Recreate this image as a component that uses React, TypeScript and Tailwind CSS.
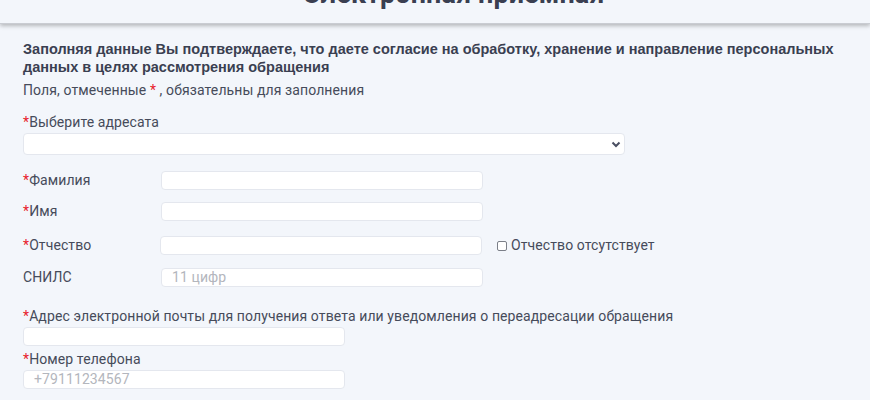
import React from "react";

const Star = () => <span className="text-[#e8212b]">*</span>;

const Input = ({ className = "", placeholder = "" }: { className?: string; placeholder?: string }) => (
  <div className={`h-[19px] bg-white border border-[#e4e7ee] rounded-[4px] flex items-center text-[14px] text-[#b3b6bd] ${className}`}>
    {placeholder}
  </div>
);

export default function App() {
  return (
    <div className="w-[870px] h-[400px] overflow-hidden bg-[#f3f6fb] text-[#464b5a] tracking-[0.1px]" style={{ fontFamily: "Roboto, 'Noto Sans', sans-serif" }}>
      <div className="h-[24px] relative bg-[#f3f6fb] shadow-[0_2px_4px_rgba(0,0,0,0.25)] border-b border-[#c9ccd2] overflow-hidden">
        <div className="absolute left-[38px] right-0 -top-[24px] text-center text-[27px] leading-[36px] font-bold text-[#3a3f51]">
          Электронная приемная
        </div>
      </div>
      <div className="pl-[23px] pt-[16px]">
        <div className="text-[14.5px] font-bold leading-[18px] text-[#3a3f51] w-[830px] tracking-normal" style={{ fontFamily: "'Liberation Sans', Arial, sans-serif" }}>
          Заполняя данные Вы подтверждаете, что даете согласие на обработку, хранение и направление персональных данных в целях рассмотрения обращения
        </div>
        <div className="mt-[5px] text-[14px] leading-[18px]">
          Поля, отмеченные <Star /> , обязательны для заполнения
        </div>
        <div className="mt-[14px] text-[14px] leading-[18px]">
          <Star />Выберите адресата
        </div>
        <div className="mt-[2px] w-[602px] h-[22px] bg-white border border-[#e4e7ee] rounded-[4px] flex items-center justify-end pr-[3px]">
          <svg width="10" height="8" viewBox="0 0 10 8">
            <path d="M1.5 2.5 L5 6 L8.5 2.5" stroke="#4a4f62" strokeWidth="2" fill="none" />
          </svg>
        </div>
        <div className="mt-[16px] flex items-center h-[19px]">
          <div className="w-[138px] text-[14px]"><Star />Фамилия</div>
          <Input className="w-[322px]" />
        </div>
        <div className="mt-[12px] flex items-center h-[19px]">
          <div className="w-[138px] text-[14px]"><Star />Имя</div>
          <Input className="w-[322px]" />
        </div>
        <div className="mt-[15px] flex items-center h-[19px]">
          <div className="w-[137px] text-[14px]"><Star />Отчество</div>
          <Input className="w-[322px]" />
          <div className="ml-[15px] flex items-center text-[14px]">
            <div className="w-[10px] h-[10px] border border-[#7b7f88] rounded-[2px] bg-white mr-[4px]" />
            Отчество отсутствует
          </div>
        </div>
        <div className="mt-[13px] flex items-center h-[19px]">
          <div className="w-[138px] text-[14px]">СНИЛС</div>
          <Input className="w-[322px] pl-[10px]" placeholder="11 цифр" />
        </div>
        <div className="mt-[20px] text-[14px] leading-[18px]">
          <Star />Адрес электронной почты для получения ответа или уведомления о переадресации обращения
        </div>
        <Input className="w-[322px] mt-[2px]" />
        <div className="mt-[4px] text-[14px] leading-[18px]">
          <Star />Номер телефона
        </div>
        <Input className="w-[322px] mt-[2px] pl-[10px]" placeholder="+79111234567" />
      </div>
    </div>
  );
}
